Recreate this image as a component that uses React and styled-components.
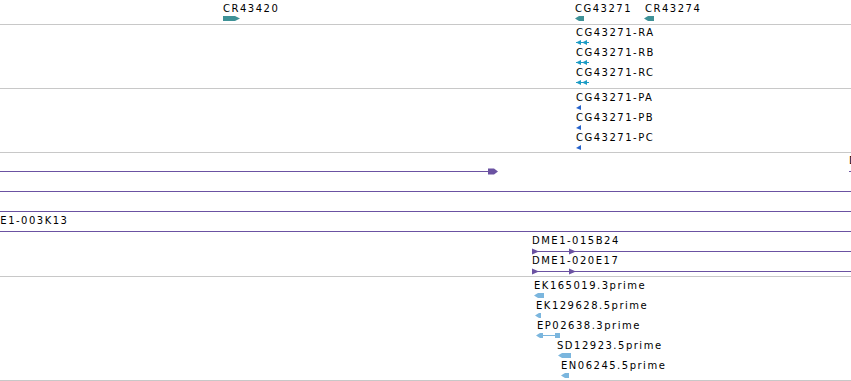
import React from "react";
import styled, { createGlobalStyle } from "styled-components";

const GlobalStyle = createGlobalStyle`
  html, body {
    margin: 0;
    padding: 0;
    background: #fff;
  }
  body {
    font-family: "DejaVu Sans", "Liberation Sans", sans-serif;
  }
`;

const COLORS = {
  teal: "#3f9297",
  cyan: "#1c9cc5",
  blue: "#2763cc",
  purple: "#6b52a2",
  light: "#7bb6de",
  grid: "#c8c8c8",
};

const Browser = styled.div`
  width: 851px;
  height: 381px;
  overflow: hidden;
  display: flex;
  flex-direction: column;
`;

const Track = styled.div`
  position: relative;
  flex: none;
  height: ${(p) => p.$h}px;
  border-bottom: 1px solid ${COLORS.grid};
  overflow: hidden;
`;

const Feature = styled.div.attrs((p) => ({
  style: { left: p.$x + "px", top: p.$y + "px" },
}))`
  position: absolute;
  display: flex;
  flex-direction: column;
  align-items: flex-start;
`;

const Label = styled.div`
  height: 12px;
  font-size: 10px;
  line-height: 12px;
  letter-spacing: 1.5px;
  color: #000;
  white-space: nowrap;
`;

const Glyph = styled.svg`
  display: block;
  margin-top: 1px;
  margin-left: ${(p) => p.$dx || 0}px;
  overflow: visible;
`;

const FwdBlock = ({ color, w = 17 }) => (
  <Glyph width={w} height={6}>
    <polygon points={`0,0 ${w - 5},0 ${w},2.5 ${w - 5},5 0,5`} fill={color} />
  </Glyph>
);

const RevBlock = ({ color, w = 9, h = 5, dx }) => (
  <Glyph width={w} height={h} $dx={dx}>
    <polygon points={`0,${h / 2} 4,0 ${w},0 ${w},${h} 4,${h}`} fill={color} />
  </Glyph>
);

const DoubleRev = ({ color }) => (
  <Glyph width={14} height={6}>
    <line x1="0" y1="2.5" x2="13" y2="2.5" stroke={color} strokeWidth="1" />
    <polygon points="0,2.5 5,0 5,5" fill={color} />
    <polygon points="6,2.5 11,0 11,5" fill={color} />
  </Glyph>
);

const SmallRev = ({ color }) => (
  <Glyph width={6} height={6}>
    <polygon points="0,3 5,0 5,5" fill={color} />
  </Glyph>
);

const SplitRev = ({ color }) => (
  <Glyph width={25} height={6} $dx={-1}>
    <line x1="2" y1="2.5" x2="24" y2="2.5" stroke={color} strokeWidth="1" />
    <polygon points="0,2.5 4,0 7,0 7,5 4,5" fill={color} />
    <rect x="19" y="0" width="5" height="5" fill={color} />
  </Glyph>
);

const Span = ({ w, arrows = [], head }) => (
  <Glyph width={w} height={7}>
    <line x1="0" y1="3.5" x2={head != null ? head + 2 : w} y2="3.5" stroke={COLORS.purple} strokeWidth="1" />
    {arrows.map((a) => (
      <polygon key={a} points={`${a},0.5 ${a + 7},3.5 ${a},6.5`} fill={COLORS.purple} />
    ))}
    {head != null && (
      <polygon
        points={`${head},0.5 ${head + 6},0.5 ${head + 10},3.5 ${head + 6},6.5 ${head},6.5`}
        fill={COLORS.purple}
      />
    )}
  </Glyph>
);

const genes = [
  { x: 223, y: 3, label: "CR43420", glyph: <FwdBlock color={COLORS.teal} /> },
  { x: 575, y: 3, label: "CG43271", glyph: <RevBlock color={COLORS.teal} w={9} /> },
  { x: 645, y: 3, label: "CR43274", glyph: <RevBlock color={COLORS.teal} w={10} dx={-1} /> },
];

const transcripts = ["CG43271-RA", "CG43271-RB", "CG43271-RC"];
const proteins = ["CG43271-PA", "CG43271-PB", "CG43271-PC"];

const clones = [
  { x: -400, y: 2, label: "", glyph: <Span w={900} head={888} /> },
  { x: 849, y: 2, label: "DME1-014C02", glyph: <Span w={40} /> },
  { x: 0, y: 22, label: "", glyph: <Span w={851} /> },
  { x: -19, y: 62, label: "DME1-003K13", glyph: <Span w={880} /> },
  { x: 532, y: 82, label: "DME1-015B24", glyph: <Span w={330} arrows={[0, 37]} /> },
  { x: 532, y: 102, label: "DME1-020E17", glyph: <Span w={330} arrows={[0, 37]} /> },
];

const ests = [
  { x: 534, y: 3, label: "EK165019.3prime", glyph: <RevBlock color={COLORS.light} w={10} /> },
  { x: 536, y: 23, label: "EK129628.5prime", glyph: <RevBlock color={COLORS.light} w={6} dx={-1} /> },
  { x: 537, y: 43, label: "EP02638.3prime", glyph: <SplitRev color={COLORS.light} /> },
  { x: 557, y: 63, label: "SD12923.5prime", glyph: <RevBlock color={COLORS.light} w={13} dx={1} /> },
  { x: 561, y: 83, label: "EN06245.5prime", glyph: <RevBlock color={COLORS.light} w={8} /> },
];

const Row = ({ f }) => (
  <Feature $x={f.x} $y={f.y}>
    <Label>{f.label}</Label>
    {f.glyph}
  </Feature>
);

export default function App() {
  return (
    <>
      <GlobalStyle />
      <Browser>
        <Track $h={24}>
          {genes.map((f) => (
            <Row key={f.label} f={f} />
          ))}
        </Track>
        <Track $h={63}>
          {transcripts.map((name, i) => (
            <Row key={name} f={{ x: 576, y: 2 + i * 20, label: name, glyph: <DoubleRev color={COLORS.cyan} /> }} />
          ))}
        </Track>
        <Track $h={63}>
          {proteins.map((name, i) => (
            <Row key={name} f={{ x: 576, y: 3 + i * 20, label: name, glyph: <SmallRev color={COLORS.blue} /> }} />
          ))}
        </Track>
        <Track $h={123}>
          {clones.map((f, i) => (
            <Row key={i} f={f} />
          ))}
          <Row f={{ x: 0, y: 42, label: "", glyph: <Span w={851} /> }} />
        </Track>
        <Track $h={103}>
          {ests.map((f) => (
            <Row key={f.label} f={f} />
          ))}
        </Track>
      </Browser>
    </>
  );
}
